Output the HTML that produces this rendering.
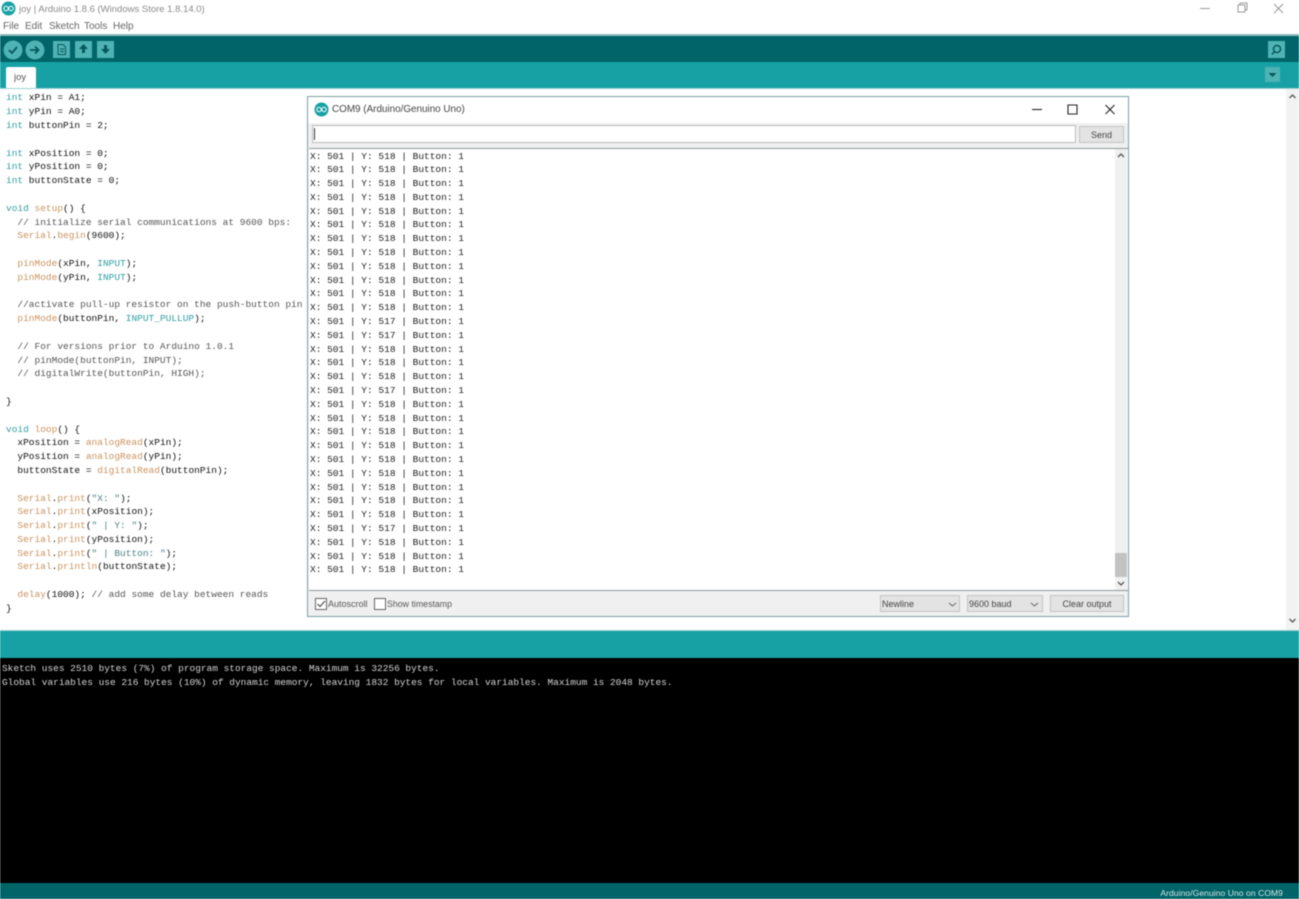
<!DOCTYPE html>
<html><head><meta charset="utf-8">
<style>
html,body{margin:0;padding:0;width:1299px;height:899px;overflow:hidden;background:#fff}
#root{position:relative;width:1299px;height:899px;overflow:hidden;font-family:"Liberation Sans",sans-serif;filter:blur(.5px)}
.a{position:absolute}
pre{margin:0;font-family:"Liberation Mono",monospace;font-size:9.5px;line-height:13.8px;position:absolute;color:#111}
.k{color:#2f9ea2}.f{color:#c9935f}.c{color:#555}.s{color:#4d7f85}
.ui{font-size:9px;color:#555;white-space:nowrap;position:absolute}
.btn{position:absolute;background:#e3e3e3;border:1px solid #c4c4c4;box-sizing:border-box;font-size:9px;color:#444;display:flex;align-items:center;justify-content:center}
.tb{position:absolute;top:41px;width:17px;height:17px;background:#4fb3b5}
.m{font-size:10px;color:#666;top:21px}
</style></head><body>
<div id="root">
<!-- title bar -->
<svg class="a" style="left:1px;top:1px" width="15" height="15" viewBox="0 0 15 15"><circle cx="7.5" cy="7.5" r="7" fill="#17a1a5"/><circle cx="5" cy="7.500" r="2.200" fill="none" stroke="#fff"/><circle cx="10" cy="7.500" r="2.200" fill="none" stroke="#fff"/></svg>
<div class="ui" style="left:19px;top:4px;font-size:9.5px;color:#8a8a8a">joy | Arduino 1.8.6 (Windows Store 1.8.14.0)</div>
<div class="ui m" style="left:3px">File</div>
<div class="ui m" style="left:25px">Edit</div>
<div class="ui m" style="left:49px">Sketch</div>
<div class="ui m" style="left:84px">Tools</div>
<div class="ui m" style="left:113px">Help</div>
<svg class="a" style="left:1195px;top:0" width="104" height="16" fill="none" stroke="#999"><path d="M5 8.500h10"/><path d="M43 5h7v7h-7z M45 5V3h7v7h-2"/><path d="M79 4l9 9M88 4l-9 9"/></svg>
<!-- toolbar -->
<div class="a" style="left:0;top:34px;width:1299px;height:2px;background:#8fbcbd"></div>
<div class="a" style="left:0;top:36px;width:1299px;height:26px;background:#006468"></div>
<div class="a" style="left:0;top:62px;width:1299px;height:26px;background:#17a1a5"></div>
<div class="a" style="left:0;top:88px;width:1299px;height:1px;background:#9fd2d3"></div>
<svg class="a" style="left:3px;top:40px" width="43" height="20" viewBox="0 0 43 20"><circle cx="10" cy="10" r="9.500" fill="#4fb3b5"/><circle cx="32" cy="10" r="9.500" fill="#4fb3b5"/><path d="M6 10l3 3 5-6" fill="none" stroke="#06585c" stroke-width="1.800"/><path d="M27 10h8M32 6.500l3.500 3.500-3.500 3.500" fill="none" stroke="#06585c" stroke-width="1.800"/></svg>
<div class="tb" style="left:53px"><svg width="17" height="17" fill="none" stroke="#06585c"><path d="M5 3.500h5l2.500 2.500v7.500h-7.500z M7 8h4M7 10.500h4"/></svg></div>
<div class="tb" style="left:75px"><svg width="17" height="17"><path d="M8.500 3l4.500 5h-3v4h-3v-4h-3z" fill="#06585c"/></svg></div>
<div class="tb" style="left:97px"><svg width="17" height="17"><path d="M8.500 13l4.500-5h-3v-4h-3v4h-3z" fill="#06585c"/></svg></div>
<div class="tb" style="left:1268px"><svg width="17" height="17" fill="none" stroke="#06585c" stroke-width="1.500"><circle cx="9" cy="8" r="3.500"/><path d="M6.500 10.500l-2.500 3"/></svg></div>
<div class="a" style="left:1265px;top:67px;width:15px;height:15px;background:#4fb3b5"><svg width="15" height="15"><path d="M3.500 6h8l-4 4z" fill="#06585c"/></svg></div>
<div class="a" style="left:6px;top:67px;width:30px;height:21px;background:#fff;border-radius:2px 2px 0 0"></div>
<div class="ui" style="left:14px;top:72px;font-size:9.500px;color:#555">joy</div>
<!-- editor -->
<pre style="left:6px;top:91.400px"><span class="k">int</span> xPin = A1;
<span class="k">int</span> yPin = A0;
<span class="k">int</span> buttonPin = 2;

<span class="k">int</span> xPosition = 0;
<span class="k">int</span> yPosition = 0;
<span class="k">int</span> buttonState = 0;

<span class="k">void</span> <span class="f">setup</span>() {
  <span class="c">// initialize serial communications at 9600 bps:</span>
  <span class="f">Serial</span>.<span class="f">begin</span>(9600);

  <span class="f">pinMode</span>(xPin, <span class="k">INPUT</span>);
  <span class="f">pinMode</span>(yPin, <span class="k">INPUT</span>);

  <span class="c">//activate pull-up resistor on the push-button pin</span>
  <span class="f">pinMode</span>(buttonPin, <span class="k">INPUT_PULLUP</span>);

  <span class="c">// For versions prior to Arduino 1.0.1</span>
  <span class="c">// pinMode(buttonPin, INPUT);</span>
  <span class="c">// digitalWrite(buttonPin, HIGH);</span>

}

<span class="k">void</span> <span class="f">loop</span>() {
  xPosition = <span class="f">analogRead</span>(xPin);
  yPosition = <span class="f">analogRead</span>(yPin);
  buttonState = <span class="f">digitalRead</span>(buttonPin);

  <span class="f">Serial</span>.<span class="f">print</span>(<span class="s">"X: "</span>);
  <span class="f">Serial</span>.<span class="f">print</span>(xPosition);
  <span class="f">Serial</span>.<span class="f">print</span>(<span class="s">" | Y: "</span>);
  <span class="f">Serial</span>.<span class="f">print</span>(yPosition);
  <span class="f">Serial</span>.<span class="f">print</span>(<span class="s">" | Button: "</span>);
  <span class="f">Serial</span>.<span class="f">println</span>(buttonState);

  <span class="f">delay</span>(1000); <span class="c">// add some delay between reads</span>
}</pre>
<!-- editor scrollbar -->
<div class="a" style="left:1286px;top:89px;width:13px;height:541px;background:#f2f2f2"></div>
<svg class="a" style="left:1286px;top:90px" width="13" height="540" fill="none" stroke="#555" stroke-width="1.300"><path d="M3.500 8l3-3 3 3M3.500 529l3 3 3-3"/></svg>
<!-- serial monitor -->
<div class="a" style="left:307px;top:96px;width:822px;height:521px;box-sizing:border-box;background:#f0f0f0;border:1px solid #7d9fa6"></div>
<div class="a" style="left:308px;top:97px;width:820px;height:26px;background:#fff"></div>
<svg class="a" style="left:314px;top:102px" width="15" height="15" viewBox="0 0 15 15"><circle cx="7.500" cy="7.500" r="7" fill="#17a1a5"/><circle cx="5" cy="7.500" r="2.200" fill="none" stroke="#fff"/><circle cx="10" cy="7.500" r="2.200" fill="none" stroke="#fff"/></svg>
<div class="ui" style="left:332px;top:104px;font-size:9.900px;color:#444">COM9 (Arduino/Genuino Uno)</div>
<svg class="a" style="left:1030px;top:102px" width="90" height="14" fill="none" stroke="#222" stroke-width="1.100"><path d="M2 7.500h10"/><path d="M38 3h9v9h-9z"/><path d="M75.500 3l9 9M84.500 3l-9 9"/></svg>
<div class="a" style="left:312px;top:125px;width:764px;height:18px;box-sizing:border-box;background:#fff;border:1px solid #bbb"></div>
<div class="a" style="left:314px;top:128px;width:1px;height:12px;background:#333"></div>
<div class="btn" style="left:1079px;top:126px;width:45px;height:17px;padding-top:1px">Send</div>
<div class="a" style="left:309px;top:148px;width:819px;height:443px;background:#fff;border-top:1px solid #8d9a9c;border-bottom:1px solid #8d9a9c;box-sizing:border-box"></div>
<pre style="left:310px;top:149.500px;color:#222">X: 501 | Y: 518 | Button: 1
X: 501 | Y: 518 | Button: 1
X: 501 | Y: 518 | Button: 1
X: 501 | Y: 518 | Button: 1
X: 501 | Y: 518 | Button: 1
X: 501 | Y: 518 | Button: 1
X: 501 | Y: 518 | Button: 1
X: 501 | Y: 518 | Button: 1
X: 501 | Y: 518 | Button: 1
X: 501 | Y: 518 | Button: 1
X: 501 | Y: 518 | Button: 1
X: 501 | Y: 518 | Button: 1
X: 501 | Y: 517 | Button: 1
X: 501 | Y: 517 | Button: 1
X: 501 | Y: 518 | Button: 1
X: 501 | Y: 518 | Button: 1
X: 501 | Y: 518 | Button: 1
X: 501 | Y: 517 | Button: 1
X: 501 | Y: 518 | Button: 1
X: 501 | Y: 518 | Button: 1
X: 501 | Y: 518 | Button: 1
X: 501 | Y: 518 | Button: 1
X: 501 | Y: 518 | Button: 1
X: 501 | Y: 518 | Button: 1
X: 501 | Y: 518 | Button: 1
X: 501 | Y: 518 | Button: 1
X: 501 | Y: 518 | Button: 1
X: 501 | Y: 517 | Button: 1
X: 501 | Y: 518 | Button: 1
X: 501 | Y: 518 | Button: 1
X: 501 | Y: 518 | Button: 1</pre>
<div class="a" style="left:1115px;top:149px;width:12px;height:441px;background:#f0f0f0"></div>
<div class="a" style="left:1115px;top:553px;width:12px;height:24px;background:#c2c2c2"></div>
<svg class="a" style="left:1115px;top:149px" width="12" height="441" fill="none" stroke="#555" stroke-width="1.300"><path d="M3 8l3-3 3 3M3 433l3 3 3-3"/></svg>
<!-- serial footer -->
<div class="a" style="left:315px;top:598px;width:12px;height:12px;box-sizing:border-box;border:1px solid #666;background:#fff"><svg width="10" height="10" style="display:block" fill="none" stroke="#444" stroke-width="1.100"><path d="M1.500 5l2.500 2.500 5-5.500"/></svg></div>
<div class="ui" style="left:328px;top:599px">Autoscroll</div>
<div class="a" style="left:374px;top:598px;width:12px;height:12px;box-sizing:border-box;border:1px solid #666;background:#fff"></div>
<div class="ui" style="left:387px;top:599px;font-size:8.800px">Show timestamp</div>
<div class="btn" style="left:880px;top:595px;width:80px;height:17px;justify-content:flex-start;padding-left:1px">Newline</div>
<div class="btn" style="left:967px;top:595px;width:76px;height:17px;justify-content:flex-start;padding-left:1px">9600 baud</div>
<svg class="a" style="left:880px;top:595px" width="165" height="17" fill="none" stroke="#666"><path d="M69 8l3.500 3 3.500-3M151 8l3.500 3 3.500-3"/></svg>
<div class="btn" style="left:1050px;top:595px;width:74px;height:17px">Clear output</div>
<!-- bottom -->
<div class="a" style="left:0;top:630px;width:1299px;height:1px;background:#9fd2d3"></div>
<div class="a" style="left:0;top:631px;width:1299px;height:27px;background:#17a1a5"></div>
<div class="a" style="left:0;top:658px;width:1299px;height:225px;background:#000"></div>
<pre style="left:2px;top:662px;color:#d4d4d4;font-size:9.470px">Sketch uses 2510 bytes (7%) of program storage space. Maximum is 32256 bytes.
Global variables use 216 bytes (10%) of dynamic memory, leaving 1832 bytes for local variables. Maximum is 2048 bytes.</pre>
<div class="a" style="left:0;top:883px;width:1299px;height:16px;background:#006468"></div>
<div class="ui" style="right:16px;top:888px;color:#d4e6e6;font-size:8.500px;letter-spacing:.08px">Arduino/Genuino Uno on COM9</div>
</div>
</body></html>
